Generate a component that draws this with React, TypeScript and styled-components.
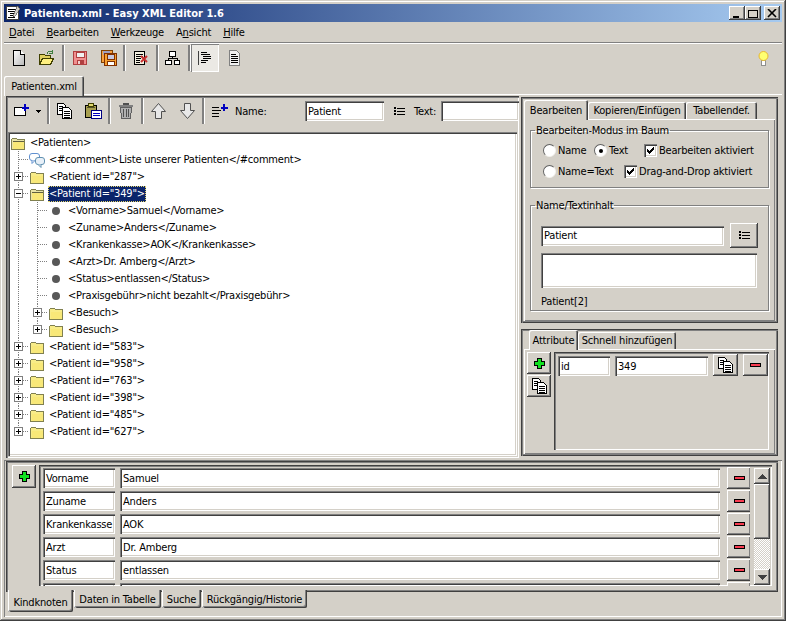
import React from "react";
import styled, { createGlobalStyle, css } from "styled-components";

const GlobalStyle = createGlobalStyle`
  html, body {
    margin: 0;
    padding: 0;
    background: #d4d0c8;
  }
  * {
    box-sizing: border-box;
  }
`;

const raised = css`
  box-shadow: inset -1px -1px 0 #404040, inset 1px 1px 0 #ffffff, inset -2px -2px 0 #808080;
`;

const sunken = css`
  box-shadow: inset 1px 1px 0 #808080, inset 2px 2px 0 #404040, inset -1px -1px 0 #ffffff, inset -2px -2px 0 #d4d0c8;
`;

const Window = styled.div`
  width: 786px;
  height: 621px;
  background: #d4d0c8;
  box-shadow: inset -1px -1px 0 #404040, inset 1px 1px 0 #d4d0c8, inset -2px -2px 0 #808080, inset 2px 2px 0 #ffffff;
  padding: 4px;
  display: flex;
  flex-direction: column;
  font-family: "DejaVu Sans Condensed", "DejaVu Sans", sans-serif;
  font-size: 11px;
  letter-spacing: -0.2px;
  color: #000;
  overflow: hidden;
`;

const TitleBar = styled.div`
  height: 18px;
  flex: none;
  background: linear-gradient(90deg, #0a246a, #a6caf0);
  display: flex;
  align-items: center;
  padding: 0 2px 0 1px;
  color: #fff;
  font-weight: 700;
  font-size: 11px;
  letter-spacing: 0;
  gap: 3px;
`;

const TitleText = styled.span`
  flex: 1;
`;

const WindowButton = styled.div<{ $gap?: number }>`
  width: 16px;
  height: 14px;
  background: #d4d0c8;
  ${raised};
  margin-left: ${({ $gap }) => $gap ?? 0}px;
  display: flex;
  align-items: center;
  justify-content: center;
`;

const MenuBar = styled.div`
  height: 20px;
  flex: none;
  display: flex;
  align-items: center;
  padding-left: 5px;
  gap: 12px;
`;

const MenuItem = styled.span`
  u {
    text-decoration: underline;
  }
`;

const ToolBar = styled.div`
  height: 32px;
  flex: none;
  border-top: 1px solid #808080;
  box-shadow: inset 0 1px 0 #ffffff;
  display: flex;
  align-items: center;
  padding: 0 0 1px 1px;
`;

const ToolButton = styled.div<{ $width?: number; $pressed?: boolean }>`
  width: ${({ $width }) => $width ?? 28}px;
  height: 28px;
  flex: none;
  display: flex;
  align-items: center;
  justify-content: center;
  gap: 6px;
  ${({ $pressed }) =>
    $pressed &&
    css`
      background: #ebe9e4;
      box-shadow: inset 1px 1px 0 #808080, inset -1px -1px 0 #ffffff;
    `}
`;

const ToolSep = styled.div<{ $width?: number }>`
  width: ${({ $width }) => $width ?? 4}px;
  height: 26px;
  flex: none;
  display: flex;
  justify-content: center;

  &::before {
    content: "";
    width: 2px;
    background: #808080;
    border-right: 1px solid #ffffff;
  }
`;

const BulbSlot = styled.div`
  margin-left: auto;
  margin-right: 10px;
  width: 16px;
  display: flex;
  justify-content: center;
`;

const DocTabs = styled.div`
  height: 21px;
  flex: none;
  display: flex;
  align-items: flex-end;
  box-shadow: inset 0 -1px 0 #ffffff;
`;

const TopTab = styled.div<{ $width: number; $active?: boolean }>`
  width: ${({ $width }) => $width}px;
  height: ${({ $active }) => ($active ? 20 : 17)}px;
  margin-bottom: ${({ $active }) => ($active ? -1 : 0)}px;
  flex: none;
  background: #d4d0c8;
  border-radius: 2px 2px 0 0;
  box-shadow: inset 1px 1px 0 #ffffff, inset -1px 0 0 #404040, inset -2px 0 0 #808080;
  display: flex;
  align-items: center;
  justify-content: center;
  white-space: nowrap;
  position: relative;
  z-index: ${({ $active }) => ($active ? 2 : 1)};
`;

const DocPage = styled.div`
  height: 363px;
  flex: none;
  display: flex;
  padding: 1px 0 0 2px;
  gap: 2px;
`;

const LeftPane = styled.div`
  width: 513px;
  display: flex;
  flex-direction: column;
  box-shadow: inset 1px 1px 0 #404040, inset 2px 2px 0 #808080, inset -1px -1px 0 #ffffff;
  overflow: hidden;
`;

const NodeBar = styled.div`
  height: 36px;
  flex: none;
  display: flex;
  align-items: center;
  padding: 0 0 6px 3px;
`;

const NodeLabel = styled.span<{ $width: number }>`
  width: ${({ $width }) => $width}px;
  flex: none;
`;

const TextField = styled.div<{ $width: number; $height?: number; $top?: number; $left?: number }>`
  width: ${({ $width }) => $width}px;
  height: ${({ $height }) => $height ?? 20}px;
  margin-top: ${({ $top }) => $top ?? 0}px;
  margin-left: ${({ $left }) => $left ?? 0}px;
  flex: none;
  background: #fff;
  ${sunken};
  padding: 0 3px;
  display: flex;
  align-items: center;
  white-space: nowrap;
  overflow: hidden;
`;

const Tree = styled.div`
  flex: 1;
  margin: 0 2px 2px 2px;
  background: #fff;
  ${sunken};
  padding: 2px 0 0 2px;
  overflow: hidden;
`;

const TreeRowBox = styled.div`
  height: 17px;
  display: flex;
  align-items: center;
`;

const TreeIconBox = styled.div`
  width: 16px;
  height: 16px;
  flex: none;
  margin-right: 4px;
`;

const TreeText = styled.span<{ $selected?: boolean }>`
  white-space: nowrap;
  height: 16px;
  line-height: 16px;
  ${({ $selected }) =>
    $selected &&
    css`
      margin: 0 -1px;
      padding: 0 1px;
      background: #0a246a;
      color: #fff;
      outline: 1px dotted #e4d468;
      outline-offset: -1px;
    `}
`;

const RightColumn = styled.div`
  flex: 1;
  display: flex;
  flex-direction: column;
  gap: 5px;
  min-width: 0;
`;

const TabFrame = styled.div<{ $height: number; $top: number }>`
  height: ${({ $height }) => $height}px;
  width: 257px;
  flex: none;
  margin-top: 1px;
  box-shadow: inset 1px 1px 0 #404040, inset 2px 2px 0 #808080, inset -1px -1px 0 #404040, inset -2px -2px 0 #808080;
  padding: ${({ $top }) => $top}px 3px 2px 3px;
  display: flex;
  flex-direction: column;
`;

const TabStrip = styled.div<{ $pad?: number }>`
  height: 19px;
  flex: none;
  display: flex;
  align-items: flex-end;
  padding-left: ${({ $pad }) => $pad ?? 0}px;
`;

const TabBody = styled.div`
  flex: 1;
  box-shadow: inset 1px 1px 0 #ffffff, inset -1px -1px 0 #808080;
  min-height: 0;
`;

const EditBody = styled(TabBody)`
  padding: 5px 6px 4px 6px;
  display: flex;
  flex-direction: column;
  gap: 11px;
`;

const Group = styled.fieldset<{ $height: number }>`
  height: ${({ $height }) => $height}px;
  flex: none;
  margin: 0;
  padding: 0 10px;
  border: 1px solid #808080;
  box-shadow: 1px 1px 0 #ffffff, inset 1px 1px 0 #ffffff;
  display: flex;
  flex-direction: column;
  min-width: 0;
`;

const GroupTitle = styled.legend`
  padding: 0 1px;
  margin-left: -6px;
  line-height: 13px;
`;

const OptionList = styled.div`
  margin-top: 3px;
  padding-left: 2px;
`;

const OptionRow = styled.div`
  height: 21px;
  display: flex;
  align-items: center;
`;

const Option = styled.label<{ $width: number }>`
  width: ${({ $width }) => $width}px;
  flex: none;
  display: flex;
  align-items: center;
  gap: 2px;
  white-space: nowrap;
`;

const Radio = styled.span<{ $on?: boolean }>`
  width: 13px;
  height: 13px;
  flex: none;
  border-radius: 50%;
  background: #fff;
  border: 1px solid;
  border-color: #606060 #f4f2ee #f4f2ee #606060;
  display: flex;
  align-items: center;
  justify-content: center;

  &::after {
    content: "";
    width: 4px;
    height: 4px;
    border-radius: 50%;
    background: ${({ $on }) => ($on ? "#000" : "transparent")};
  }
`;

const CheckBox = styled.span`
  width: 13px;
  height: 13px;
  flex: none;
  background: #fff;
  ${sunken};
  display: flex;
  align-items: center;
  justify-content: center;
`;

const ContentRow = styled.div`
  display: flex;
  align-items: center;
  gap: 6px;
  height: 25px;
`;

const PushButton = styled.div<{ $width: number; $height: number; $top?: number; $left?: number }>`
  width: ${({ $width }) => $width}px;
  height: ${({ $height }) => $height}px;
  margin-top: ${({ $top }) => $top ?? 0}px;
  margin-left: ${({ $left }) => $left ?? 0}px;
  flex: none;
  background: #d4d0c8;
  ${raised};
  display: flex;
  align-items: center;
  justify-content: center;
`;

const PathLabel = styled.div`
  margin-top: 7px;
  height: 14px;
  line-height: 14px;
`;

const ContentFields = styled.div`
  display: flex;
  flex-direction: column;
  margin-top: 11px;
  gap: 5px;
`;

const AttributeBody = styled(TabBody)`
  display: flex;
  gap: 3px;
  padding: 3px 6px 4px 3px;
`;

const SideButtons = styled.div`
  display: flex;
  flex-direction: column;
  gap: 1px;
  flex: none;
`;

const RowsPanel = styled.div`
  flex: 1;
  min-width: 0;
  box-shadow: inset 1px 1px 0 #404040, inset 2px 2px 0 #808080, inset -1px -1px 0 #ffffff;
  overflow: hidden;
  display: flex;
`;

const AttributeRow = styled.div`
  display: flex;
  align-items: flex-start;
  gap: 5px;
  padding: 2px 0 0 4px;
  height: 26px;
`;

const BottomPanel = styled.div`
  flex: 1;
  margin-top: 2px;
  box-shadow: inset 1px 1px 0 #808080, inset -1px -1px 0 #ffffff;
  padding: 1px 1px 2px 2px;
  display: flex;
  flex-direction: column;
`;

const BottomBody = styled.div`
  height: 131px;
  flex: none;
  margin-right: 3px;
  box-shadow: inset 1px 1px 0 #404040, inset 2px 2px 0 #808080, inset -1px -1px 0 #404040, inset -2px -2px 0 #808080;
  display: flex;
  padding: 4px 6px 6px 6px;
  gap: 3px;
`;

const ChildRows = styled.div`
  flex: 1;
  min-width: 0;
  overflow: hidden;
  padding: 3px 0 0 4px;
  display: flex;
  flex-direction: column;
  gap: 3px;
`;

const ChildRowBox = styled.div`
  height: 20px;
  flex: none;
  display: flex;
  align-items: flex-start;
`;

const ScrollBar = styled.div`
  width: 16px;
  flex: none;
  margin: 3px 2px 1px 4px;
  display: flex;
  flex-direction: column;
  background: repeating-conic-gradient(#d4d0c8 0 25%, #ffffff 0 50%) 0 0 / 2px 2px;
`;

const ScrollArrow = styled.div`
  height: 16px;
  flex: none;
  background: #d4d0c8;
  ${raised};
  display: flex;
  align-items: center;
  justify-content: center;
`;

const ScrollThumb = styled.div`
  height: 55px;
  flex: none;
  background: #d4d0c8;
  ${raised};
`;

const ScrollTrack = styled.div`
  flex: 1;
`;

const BottomTabs = styled.div`
  display: flex;
  padding-left: 2px;
  gap: 1px;
`;

const BottomTab = styled.div<{ $width: number; $active?: boolean }>`
  width: ${({ $width }) => $width}px;
  height: ${({ $active }) => ($active ? 22 : 18)}px;
  margin-top: -2px;
  flex: none;
  background: #d4d0c8;
  border-radius: 0 0 2px 2px;
  box-shadow: inset 1px 0 0 #ffffff, inset -1px -1px 0 #404040, inset -2px -2px 0 #808080;
  display: flex;
  align-items: center;
  justify-content: center;
  white-space: nowrap;
  position: relative;
  padding-top: ${({ $active }) => ($active ? 3 : 0)}px;
`;

const Ink = styled.svg`
  display: block;
  flex: none;
  shape-rendering: crispEdges;
`;

const SoftInk = styled.svg`
  display: block;
  flex: none;
`;

const NewDocIcon = () => (
  <Ink width="16" height="16" viewBox="0 0 16 16">
    <defs>
      <linearGradient id="paper" x1="0" y1="0" x2="1" y2="1">
        <stop offset="0" stopColor="#fff" />
        <stop offset="1" stopColor="#b8b8b8" />
      </linearGradient>
    </defs>
    <path d="M2.5.5h7l4 4v11h-11z" fill="url(#paper)" stroke="#000" />
    <path d="M9.5.5v4h4" fill="#fff" stroke="#000" />
  </Ink>
);

const OpenIcon = () => (
  <Ink width="16" height="16" viewBox="0 0 16 16">
    <path d="M.5 4.5h5l1 1h5v3h-8l-3 6z" fill="#e0d060" stroke="#404000" />
    <path d="M.5 14.5l3-6h11l-3 6z" fill="#fff080" stroke="#404000" />
    <path d="M8 3.5c1-2 3-2.5 5-2M13 0v3h-3" fill="none" stroke="#408040" />
  </Ink>
);

const FloppyIcon = ({ stroke, fill }: { stroke: string; fill: string }) => (
  <>
    <rect x="1.5" y="1.5" width="13" height="13" fill={fill} stroke={stroke} />
    <rect x="4" y="2" width="8" height="5" fill="#f0f0f0" stroke={stroke} strokeWidth="1" />
    <rect x="4.5" y="9.5" width="7" height="5" fill={stroke} />
    <rect x="6" y="10.5" width="2" height="3" fill="#f0d0d0" />
  </>
);

const SaveIcon = () => (
  <Ink width="16" height="16" viewBox="0 0 16 16">
    <FloppyIcon stroke="#b04040" fill="#f09090" />
  </Ink>
);

const SaveAllIcon = () => (
  <Ink width="17" height="17" viewBox="0 0 17 17">
    <rect x="1.5" y="0.5" width="11" height="12" fill="#f8a040" stroke="#804000" />
    <rect x="3" y="1" width="7" height="4" fill="#a0a0c0" />
    <g transform="translate(2 2)">
      <rect x="2.500" y="1.500" width="12" height="12" fill="#f8a030" stroke="#803000" />
      <rect x="5" y="2" width="7" height="5" fill="#c8c8e0" stroke="#803000" />
      <rect x="5" y="9" width="7" height="4" fill="#fff" stroke="#803000" />
    </g>
  </Ink>
);

const CloseDocIcon = () => (
  <Ink width="16" height="16" viewBox="0 0 16 16">
    <rect x="1.5" y="1.5" width="10" height="13" fill="#f4f0e0" stroke="#000" />
    <path d="M3 4h7M3 6h7M3 8h5M3 10h4M3 12h4" stroke="#000" />
    <path d="M8 6l6 6M14 6l-6 6" stroke="#c83030" strokeWidth="2" shapeRendering="auto" />
  </Ink>
);

const NetworkIcon = () => (
  <Ink width="16" height="16" viewBox="0 0 16 16">
    <rect x="4.5" y="1.5" width="6" height="5" fill="#fff" stroke="#000" />
    <rect x="0.5" y="10.5" width="6" height="4" fill="#fff" stroke="#000" />
    <rect x="9.5" y="10.5" width="5" height="4" fill="#fff" stroke="#000" />
    <path d="M7.5 6.5v2M3.5 10.5v-2h8.5v2" fill="none" stroke="#000" />
  </Ink>
);

const TreeViewIcon = () => (
  <Ink width="16" height="16" viewBox="0 0 16 16">
    <path d="M1.5 1v14" stroke="#404040" />
    <path d="M4 2h6M4 4h9M6 6h8M6 8h8M4 10h7M4 12h5" stroke="#000" />
  </Ink>
);

const PageIcon = () => (
  <Ink width="13" height="16" viewBox="0 0 13 16">
    <path d="M1.5.5h7l3 3v12h-10z" fill="#f0f0f0" stroke="#808080" />
    <path d="M3 4h5M3 6h7M3 8h7M3 10h7M3 12h7" stroke="#000" />
  </Ink>
);

const BulbIcon = () => (
  <SoftInk width="12" height="16" viewBox="0 0 12 16">
    <rect x="3.5" y="10.5" width="4" height="5" fill="#fff" stroke="#909090" />
    <circle cx="5.5" cy="6" r="4.5" fill="#ffff70" stroke="#e8b830" />
  </SoftInk>
);

const NewNodeIcon = () => (
  <Ink width="16" height="16" viewBox="0 0 16 16">
    <rect x="0.5" y="4.5" width="11" height="8" fill="#fff" stroke="#000" />
    <path d="M11 1v7M7.500 4.500h7" stroke="#0000c0" strokeWidth="2" />
  </Ink>
);

const DropArrow = () => (
  <Ink width="5" height="3" viewBox="0 0 5 3">
    <path d="M0 0h5v1h-1v1h-1v1h-1v-1h-1v-1h-1z" fill="#000" />
  </Ink>
);

const CopyIcon = () => (
  <Ink width="15" height="16" viewBox="0 0 15 16">
    <path d="M.5.5h6l2 2v9h-8z" fill="#fff" stroke="#000" />
    <path d="M5.500 4.500h6l3 3v8h-9z" fill="#fff" stroke="#000" />
    <path d="M2 3h4M2 5h3M2 7h3M7 8h6M7 10h6M7 12h6M7 14h6" stroke="#000" />
  </Ink>
);

const PasteIcon = () => (
  <Ink width="17" height="16" viewBox="0 0 17 16">
    <rect x="0.5" y="2.5" width="11" height="12" fill="#a8a050" stroke="#000" />
    <rect x="3.5" y="0.5" width="5" height="3" fill="#e0d870" stroke="#404000" />
    <rect x="2" y="4" width="8" height="1" fill="#000" opacity="0.5" />
    <rect x="6.5" y="7.5" width="10" height="8" fill="#fff" stroke="#000080" />
    <path d="M8 10h7M8 12h7" stroke="#0000c0" />
  </Ink>
);

const TrashIcon = () => (
  <Ink width="14" height="16" viewBox="0 0 14 16">
    <path d="M0 2h14v2h-14z" fill="#808080" />
    <path d="M4 0h6v2h-6z" fill="#505050" />
    <path d="M1.500 4.500h11l-1 11h-9z" fill="#b0b0b0" stroke="#606060" />
    <path d="M4.500 6v8M7 6v8M9.500 6v8" stroke="#505050" />
  </Ink>
);

const ArrowIcon = ({ down }: { down?: boolean }) => (
  <SoftInk width="15" height="16" viewBox="0 0 15 16">
    <path
      d={down ? "M4.500 .5h6v7h4l-7 8-7-8h4z" : "M7.500 .5l7 8h-4v7h-6v-7h-4z"}
      fill="#e8e8e8"
      stroke="#505050"
    />
  </SoftInk>
);

const AddChildIcon = () => (
  <Ink width="18" height="16" viewBox="0 0 18 16">
    <path d="M1 4h7M1 7h9M1 10h7M1 13h7" stroke="#000" />
    <path d="M13 1v7M9.500 4.500h7" stroke="#0000c0" strokeWidth="2" />
  </Ink>
);

const ListIcon = () => (
  <Ink width="11" height="9" viewBox="0 0 11 9">
    <path d="M0 0h2v2h-2zM0 3h2v2h-2zM0 6h2v2h-2z" fill="#000" />
    <path d="M3 1h8M3 4h8M3 7h8" stroke="#000" />
  </Ink>
);

const PlusIcon = () => (
  <Ink width="11" height="11" viewBox="0 0 11 11">
    <path d="M3.500.5h4v3h3v4h-3v3h-4v-3h-3v-4h3z" fill="#10e020" stroke="#000" />
  </Ink>
);

const MinusIcon = () => (
  <Ink width="11" height="5" viewBox="0 0 11 5">
    <rect x="0.5" y="0.5" width="10" height="3" fill="#f83c50" stroke="#000" />
  </Ink>
);

const FolderIcon = ({ open }: { open?: boolean }) => (
  <Ink width="16" height="16" viewBox="0 0 16 16">
    <path d="M1.500 14.500v-10l1-1h4l1 1h7v10z" fill={open ? "#e8e4a8" : "#f8ec88"} stroke="#808050" />
    <rect x="3" y="7" width="11" height="7" fill="#f8e878" />
    {open && <path d="M2.500 5.500h11v1h-11z" fill="#606040" />}
  </Ink>
);

const CommentIcon = () => (
  <SoftInk width="16" height="16" viewBox="0 0 16 16">
    <rect x="0.5" y="1.5" width="10" height="7" rx="2.5" fill="#fff" stroke="#6090d0" />
    <path d="M3 8.500v3l3-3" fill="#fff" stroke="#6090d0" />
    <rect x="6.5" y="5.5" width="9" height="7" rx="2.5" fill="#e8f0f8" stroke="#6090b0" />
    <path d="M12 12.500v3l-3-3" fill="#e8f0f8" stroke="#6090b0" />
  </SoftInk>
);

const BulletIcon = () => (
  <SoftInk width="16" height="16" viewBox="0 0 16 16">
    <circle cx="8" cy="8" r="4" fill="#585858" />
  </SoftInk>
);

const CheckMark = () => (
  <Ink width="9" height="9" viewBox="0 0 9 9">
    <path d="M1 3v3l2 2 5-5v-3l-5 5z" fill="#000" />
  </Ink>
);

const WindowGlyph = ({ kind }: { kind: "min" | "max" | "close" }) => (
  <Ink width="10" height="9" viewBox="0 0 10 9">
    {kind === "min" && <rect x="1" y="7" width="6" height="2" fill="#000" />}
    {kind === "max" && <path d="M0.500 1.500h9v7h-9z M0 1h10" fill="none" stroke="#000" />}
    {kind === "close" && <path d="M1 0l8 8M9 0l-8 8" stroke="#000" strokeWidth="1.6" shapeRendering="auto" />}
  </Ink>
);

const AppIcon = () => (
  <Ink width="16" height="16" viewBox="0 0 16 16">
    <rect x="1.5" y="1.5" width="12" height="13" fill="#fff" stroke="#404040" />
    <path d="M3 4h9M3 6h7M5 8h7M5 10h5M3 12h7" stroke="#000" />
    <path d="M12 1l3 3-5 7-2 1 1-3z" fill="#d4d0c8" stroke="#404040" strokeWidth="0.6" />
  </Ink>
);

type Guide = "none" | "line" | "tee" | "end";

const TreeGuide = ({ kind, box, boxOpen }: { kind: Guide; box?: boolean; boxOpen?: boolean }) => (
  <Ink width="19" height="17" viewBox="0 0 19 17">
    {kind !== "none" && (
      <path d={kind === "end" ? "M8.500 0v8" : "M8.500 0v17"} stroke="#808080" strokeDasharray="1 1" />
    )}
    {(kind === "tee" || kind === "end") && <path d="M9 8.500h10" stroke="#808080" strokeDasharray="1 1" />}
    {box && (
      <>
        <rect x="4.5" y="4.5" width="8" height="8" fill="#fff" stroke="#808080" />
        <path d="M6 8.500h5" stroke="#000" />
        {!boxOpen && <path d="M8.500 6v5" stroke="#000" />}
      </>
    )}
  </Ink>
);

const Row = ({ guides, icon, text, selected }: { guides: React.ReactNode; icon: React.ReactNode; text: string; selected?: boolean }) => (
  <TreeRowBox>
    {guides}
    <TreeIconBox>{icon}</TreeIconBox>
    <TreeText $selected={selected}>{text}</TreeText>
  </TreeRowBox>
);

const leaves = [
  "<Vorname>Samuel</Vorname>",
  "<Zuname>Anders</Zuname>",
  "<Krankenkasse>AOK</Krankenkasse>",
  "<Arzt>Dr. Amberg</Arzt>",
  "<Status>entlassen</Status>",
  "<Praxisgebühr>nicht bezahlt</Praxisgebühr>",
];

const laterIds = ["583", "958", "763", "398", "485", "627"];

const children = [
  ["Vorname", "Samuel"],
  ["Zuname", "Anders"],
  ["Krankenkasse", "AOK"],
  ["Arzt", "Dr. Amberg"],
  ["Status", "entlassen"],
  ["", ""],
];

export default function App() {
  return (
    <Window>
      <GlobalStyle />
      <TitleBar>
        <AppIcon />
        <TitleText>Patienten.xml - Easy XML Editor 1.6</TitleText>
        <WindowButton>
          <WindowGlyph kind="min" />
        </WindowButton>
        <WindowButton $gap={-3}>
          <WindowGlyph kind="max" />
        </WindowButton>
        <WindowButton>
          <WindowGlyph kind="close" />
        </WindowButton>
      </TitleBar>

      <MenuBar>
        <MenuItem><u>D</u>atei</MenuItem>
        <MenuItem><u>B</u>earbeiten</MenuItem>
        <MenuItem><u>W</u>erkzeuge</MenuItem>
        <MenuItem>A<u>n</u>sicht</MenuItem>
        <MenuItem><u>H</u>ilfe</MenuItem>
      </MenuBar>

      <ToolBar>
        <ToolButton><NewDocIcon /></ToolButton>
        <ToolButton><OpenIcon /></ToolButton>
        <ToolSep $width={5} />
        <ToolButton><SaveIcon /></ToolButton>
        <ToolButton><SaveAllIcon /></ToolButton>
        <ToolSep $width={5} />
        <ToolButton><CloseDocIcon /></ToolButton>
        <ToolSep />
        <ToolButton><NetworkIcon /></ToolButton>
        <ToolSep />
        <ToolButton $pressed><TreeViewIcon /></ToolButton>
        <ToolButton $width={30}><PageIcon /></ToolButton>
        <BulbSlot><BulbIcon /></BulbSlot>
      </ToolBar>

      <DocTabs>
        <TopTab $width={80} $active>Patienten.xml</TopTab>
      </DocTabs>

      <DocPage>
        <LeftPane>
          <NodeBar>
            <ToolButton $width={37}><NewNodeIcon /><DropArrow /></ToolButton>
            <ToolSep />
            <ToolButton $width={29}><CopyIcon /></ToolButton>
            <ToolButton><PasteIcon /></ToolButton>
            <ToolSep />
            <ToolButton $width={29}><TrashIcon /></ToolButton>
            <ToolSep />
            <ToolButton $width={29}><ArrowIcon /></ToolButton>
            <ToolButton><ArrowIcon down /></ToolButton>
            <ToolSep />
            <ToolButton $width={30}><AddChildIcon /></ToolButton>
            <NodeLabel $width={70}>Name:</NodeLabel>
            <TextField $width={79}>Patient</TextField>
            <ToolButton $width={30}><ListIcon /></ToolButton>
            <NodeLabel $width={27}>Text:</NodeLabel>
            <TextField $width={78} />
          </NodeBar>
          <Tree>
            <Row guides={null} icon={<FolderIcon open />} text="<Patienten>" />
            <Row guides={<TreeGuide kind="tee" />} icon={<CommentIcon />} text="<#comment>Liste unserer Patienten</#comment>" />
            <Row guides={<TreeGuide kind="tee" box />} icon={<FolderIcon />} text={'<Patient id="287">'} />
            <Row guides={<TreeGuide kind="tee" box boxOpen />} icon={<FolderIcon open />} text={'<Patient id="349">'} selected />
            {leaves.map((leaf) => (
              <Row
                key={leaf}
                guides={
                  <>
                    <TreeGuide kind="line" />
                    <TreeGuide kind="tee" />
                  </>
                }
                icon={<BulletIcon />}
                text={leaf}
              />
            ))}
            {[0, 1].map((i) => (
              <Row
                key={i}
                guides={
                  <>
                    <TreeGuide kind="line" />
                    <TreeGuide kind={i === 1 ? "end" : "tee"} box />
                  </>
                }
                icon={<FolderIcon />}
                text="<Besuch>"
              />
            ))}
            {laterIds.map((id, i) => (
              <Row
                key={id}
                guides={<TreeGuide kind={i === laterIds.length - 1 ? "end" : "tee"} box />}
                icon={<FolderIcon />}
                text={`<Patient id="${id}">`}
              />
            ))}
          </Tree>
        </LeftPane>

        <RightColumn>
          <TabFrame $height={226} $top={3}>
            <TabStrip>
              <TopTab $width={64} $active>Bearbeiten</TopTab>
              <TopTab $width={98}>Kopieren/Einfügen</TopTab>
              <TopTab $width={71}>Tabellendef.</TopTab>
            </TabStrip>
            <EditBody>
              <Group $height={64}>
                <GroupTitle>Bearbeiten-Modus im Baum</GroupTitle>
                <OptionList>
                  <OptionRow>
                    <Option $width={51}><Radio />Name</Option>
                    <Option $width={50}><Radio $on />Text</Option>
                    <Option $width={120}><CheckBox><CheckMark /></CheckBox>Bearbeiten aktiviert</Option>
                  </OptionRow>
                  <OptionRow>
                    <Option $width={81}><Radio />Name=Text</Option>
                    <Option $width={130}><CheckBox><CheckMark /></CheckBox>Drag-and-Drop aktiviert</Option>
                  </OptionRow>
                </OptionList>
              </Group>
              <Group $height={112}>
                <GroupTitle>Name/Textinhalt</GroupTitle>
                <ContentFields>
                  <ContentRow>
                    <TextField $width={183}>Patient</TextField>
                    <PushButton $width={28} $height={25}><ListIcon /></PushButton>
                  </ContentRow>
                  <TextField $width={216} $height={35} />
                </ContentFields>
                <PathLabel>Patient[2]</PathLabel>
              </Group>
            </EditBody>
          </TabFrame>

          <TabFrame $height={127} $top={1}>
            <TabStrip $pad={5}>
              <TopTab $width={49} $active>Attribute</TopTab>
              <TopTab $width={98}>Schnell hinzufügen</TopTab>
            </TabStrip>
            <AttributeBody>
              <SideButtons>
                <PushButton $width={24} $height={22}><PlusIcon /></PushButton>
                <PushButton $width={24} $height={22}><CopyIcon /></PushButton>
              </SideButtons>
              <RowsPanel>
                <AttributeRow>
                  <TextField $width={52} $top={2}>id</TextField>
                  <TextField $width={93} $top={2}>349</TextField>
                  <PushButton $width={25} $height={22}><CopyIcon /></PushButton>
                  <PushButton $width={25} $height={22}><MinusIcon /></PushButton>
                </AttributeRow>
              </RowsPanel>
            </AttributeBody>
          </TabFrame>
        </RightColumn>
      </DocPage>

      <BottomPanel>
        <BottomBody>
          <SideButtons>
            <PushButton $width={24} $height={23}><PlusIcon /></PushButton>
          </SideButtons>
          <RowsPanel>
            <ChildRows>
              {children.map(([name, value], i) => (
                <ChildRowBox key={i}>
                  <TextField $width={72}>{name}</TextField>
                  <TextField $width={600} $left={5}>{value}</TextField>
                  <PushButton $width={24} $height={22} $left={7} $top={-1}><MinusIcon /></PushButton>
                </ChildRowBox>
              ))}
            </ChildRows>
            <ScrollBar>
              <ScrollArrow>
                <Ink width="9" height="5" viewBox="0 0 9 5"><path d="M4.500 0l4.500 5h-9z" fill="#404040" /></Ink>
              </ScrollArrow>
              <ScrollThumb />
              <ScrollTrack />
              <ScrollArrow>
                <Ink width="9" height="5" viewBox="0 0 9 5"><path d="M0 0h9l-4.500 5z" fill="#404040" /></Ink>
              </ScrollArrow>
            </ScrollBar>
          </RowsPanel>
        </BottomBody>
        <BottomTabs>
          <BottomTab $width={65} $active>Kindknoten</BottomTab>
          <BottomTab $width={87}>Daten in Tabelle</BottomTab>
          <BottomTab $width={39}>Suche</BottomTab>
          <BottomTab $width={105}>Rückgängig/Historie</BottomTab>
        </BottomTabs>
      </BottomPanel>
    </Window>
  );
}
